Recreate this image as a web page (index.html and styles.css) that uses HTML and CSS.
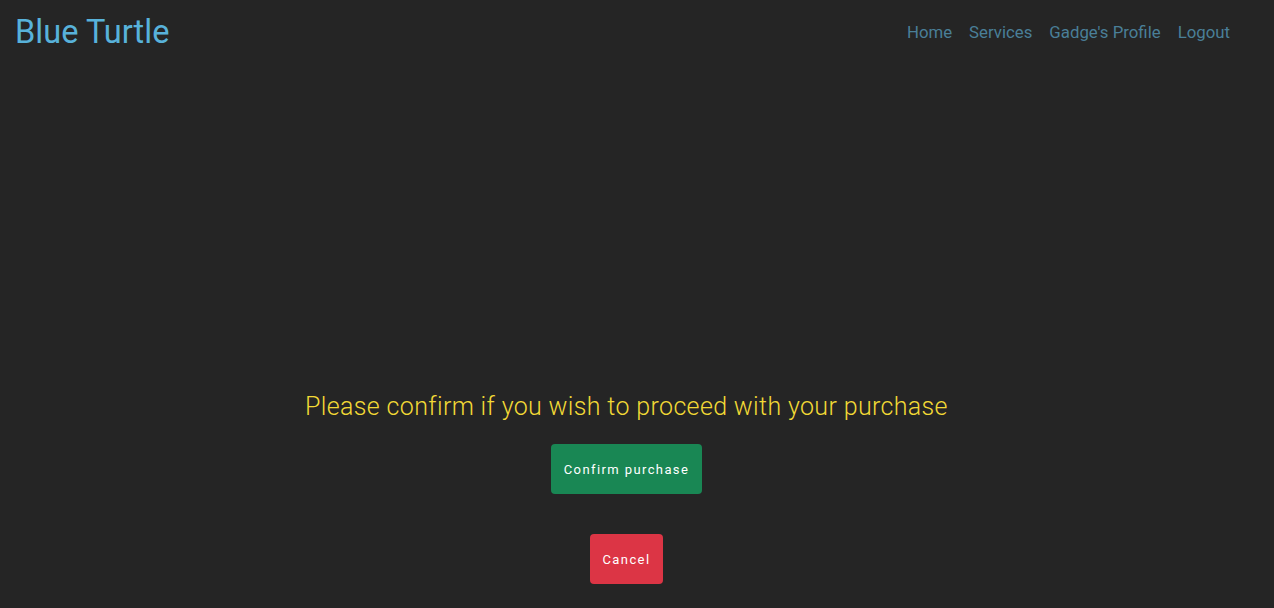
FILE: index.html
```html
<!DOCTYPE html>
<html lang="en">
<head>
<meta charset="utf-8">
<title>Blue Turtle</title>
<link rel="stylesheet" href="styles.css">
</head>
<body>
<header class="topbar">
  <a class="brand" href="#">Blue Turtle</a>
  <nav class="nav">
    <a href="#">Home</a>
    <a href="#">Services</a>
    <a href="#">Gadge's Profile</a>
    <a href="#">Logout</a>
  </nav>
</header>
<main class="confirm">
  <h2 class="confirm-title">Please confirm if you wish to proceed with your purchase</h2>
  <button class="btn btn-success">Confirm purchase</button>
  <button class="btn btn-danger">Cancel</button>
</main>
</body>
</html>
```
FILE: styles.css
```css
* { box-sizing: border-box; }
html, body { margin: 0; padding: 0; }
body {
  background: #252525;
  font-family: Roboto, "Liberation Sans", sans-serif;
  height: 608px;
  overflow: hidden;
}
.topbar {
  display: flex;
  justify-content: space-between;
  align-items: center;
  height: 63px;
  padding: 0 44px 0 15px;
}
.brand {
  color: #58b2da;
  font-size: 32.6px;
  text-decoration: none;
  font-weight: 400;
}
.nav {
  display: flex;
  gap: 17px;
}
.nav a {
  color: #4a7f98;
  text-decoration: none;
  font-size: 16.8px;
  font-family: Roboto, sans-serif;
}
.confirm {
  display: flex;
  flex-direction: column;
  align-items: center;
  padding: 329px 21px 0 0;
}
.confirm-title {
  margin: 0;
  color: #f2d935;
  font-weight: 300;
  font-size: 25px;
  letter-spacing: 0.35px;
}
.btn {
  border: none;
  border-radius: 4px;
  color: #fff;
  font-family: Roboto, sans-serif;
  font-size: 13px;
  letter-spacing: 1.4px;
  height: 50px;
  padding: 0 13px;
}
.btn-success {
  background: #198754;
  margin-top: 23px;
}
.btn-danger {
  background: #dc3545;
  margin-top: 40px;
}
```
